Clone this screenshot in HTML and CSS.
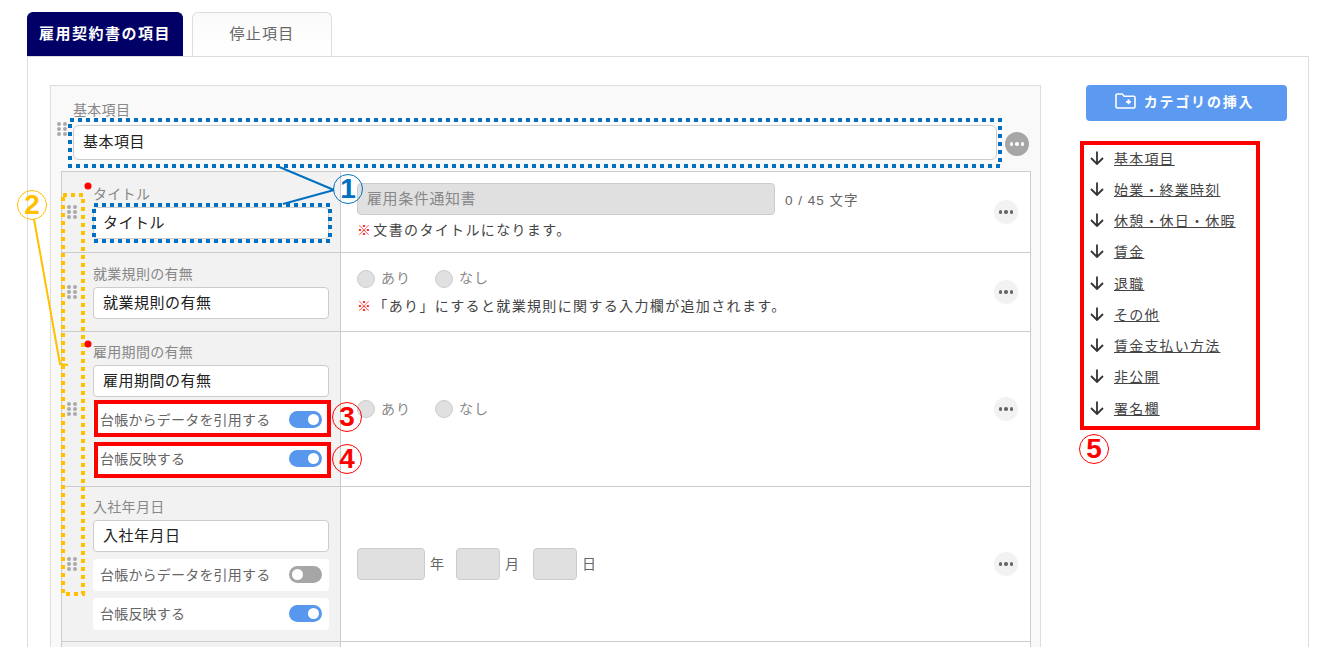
FILE: index.html
```html
<!DOCTYPE html>
<html lang="ja">
<head>
  <meta charset="UTF-8">
  <title>雇用契約書の項目</title>
  <link rel="stylesheet" href="styles.css">
</head>
<body>
  <div class="page">
    <!-- Tabs -->
    <div class="tabs">
      <div class="tab tab-active">雇用契約書の項目</div>
      <div class="tab">停止項目</div>
    </div>

    <div class="panel">
      <div class="card">
        <!-- Category -->
        <div class="category">
          <div class="grip category-grip"><i></i><i></i><i></i><i></i><i></i><i></i></div>
          <div class="category-main">
            <div class="label">基本項目</div>
            <div class="text-input category-input">基本項目</div>
          </div>
          <div class="more more-dark"><i></i><i></i><i></i></div>
        </div>

        <div class="table">
          <!-- タイトル -->
          <div class="row row-title">
            <div class="left">
              <div class="grip"><i></i><i></i><i></i><i></i><i></i><i></i></div>
              <div class="fields">
                <div class="label">タイトル</div>
                <div class="text-input">タイトル</div>
              </div>
            </div>
            <div class="right">
              <div class="content">
                <div class="title-line">
                  <div class="disabled-input">雇用条件通知書</div>
                  <span class="counter">0 / 45 文字</span>
                </div>
                <div class="note"><span class="mark">※</span>文書のタイトルになります。</div>
              </div>
              <div class="more"><i></i><i></i><i></i></div>
            </div>
          </div>

          <!-- 就業規則の有無 -->
          <div class="row row-rules">
            <div class="left">
              <div class="grip"><i></i><i></i><i></i><i></i><i></i><i></i></div>
              <div class="fields">
                <div class="label">就業規則の有無</div>
                <div class="text-input">就業規則の有無</div>
              </div>
            </div>
            <div class="right">
              <div class="content">
                <div class="radios">
                  <span class="radio"></span><span class="radio-text">あり</span>
                  <span class="radio"></span><span class="radio-text">なし</span>
                </div>
                <div class="note note-radio"><span class="mark">※</span>「あり」にすると就業規則に関する入力欄が追加されます。</div>
              </div>
              <div class="more"><i></i><i></i><i></i></div>
            </div>
          </div>

          <!-- 雇用期間の有無 -->
          <div class="row">
            <div class="left">
              <div class="grip"><i></i><i></i><i></i><i></i><i></i><i></i></div>
              <div class="fields">
                <div class="label">雇用期間の有無</div>
                <div class="text-input">雇用期間の有無</div>
                <div class="switch-row">台帳からデータを引用する<span class="toggle"></span></div>
                <div class="switch-row">台帳反映する<span class="toggle"></span></div>
              </div>
            </div>
            <div class="right">
              <div class="content">
                <div class="radios">
                  <span class="radio"></span><span class="radio-text">あり</span>
                  <span class="radio"></span><span class="radio-text">なし</span>
                </div>
              </div>
              <div class="more"><i></i><i></i><i></i></div>
            </div>
          </div>

          <!-- 入社年月日 -->
          <div class="row">
            <div class="left">
              <div class="grip"><i></i><i></i><i></i><i></i><i></i><i></i></div>
              <div class="fields">
                <div class="label">入社年月日</div>
                <div class="text-input">入社年月日</div>
                <div class="switch-row">台帳からデータを引用する<span class="toggle toggle-off"></span></div>
                <div class="switch-row">台帳反映する<span class="toggle"></span></div>
              </div>
            </div>
            <div class="right">
              <div class="content date-line">
                <span class="date-box date-year"></span><span class="date-unit">年</span>
                <span class="date-box date-month"></span><span class="date-unit">月</span>
                <span class="date-box date-month"></span><span class="date-unit">日</span>
              </div>
              <div class="more"><i></i><i></i><i></i></div>
            </div>
          </div>

          <div class="row row-next">
            <div class="left"></div>
            <div class="right"></div>
          </div>
        </div>
      </div>

      <!-- Side -->
      <div class="side">
        <div class="insert-btn">
          <svg class="folder" width="21" height="16" viewBox="0 0 21 16" fill="none" stroke="#fff" stroke-width="1.6">
            <path d="M1 2.2c0-.7.5-1.2 1.2-1.2h5l2 2.3h9.6c.7 0 1.2.5 1.2 1.2v9.3c0 .7-.5 1.2-1.2 1.2H2.2c-.7 0-1.2-.5-1.2-1.2z"/>
            <path d="M13.5 6.3v5M11 8.8h5" stroke-width="1.8"/>
          </svg>
          カテゴリの挿入
        </div>
        <ul class="jump-list">
          <li><svg class="arrow" width="14" height="14" viewBox="0 0 14 14" fill="none"><path d="M7 .5v12.5M1 7l6 6 6-6"/></svg><a>基本項目</a></li>
          <li><svg class="arrow" width="14" height="14" viewBox="0 0 14 14" fill="none"><path d="M7 .5v12.5M1 7l6 6 6-6"/></svg><a>始業・終業時刻</a></li>
          <li><svg class="arrow" width="14" height="14" viewBox="0 0 14 14" fill="none"><path d="M7 .5v12.5M1 7l6 6 6-6"/></svg><a>休憩・休日・休暇</a></li>
          <li><svg class="arrow" width="14" height="14" viewBox="0 0 14 14" fill="none"><path d="M7 .5v12.5M1 7l6 6 6-6"/></svg><a>賃金</a></li>
          <li><svg class="arrow" width="14" height="14" viewBox="0 0 14 14" fill="none"><path d="M7 .5v12.5M1 7l6 6 6-6"/></svg><a>退職</a></li>
          <li><svg class="arrow" width="14" height="14" viewBox="0 0 14 14" fill="none"><path d="M7 .5v12.5M1 7l6 6 6-6"/></svg><a>その他</a></li>
          <li><svg class="arrow" width="14" height="14" viewBox="0 0 14 14" fill="none"><path d="M7 .5v12.5M1 7l6 6 6-6"/></svg><a>賃金支払い方法</a></li>
          <li><svg class="arrow" width="14" height="14" viewBox="0 0 14 14" fill="none"><path d="M7 .5v12.5M1 7l6 6 6-6"/></svg><a>非公開</a></li>
          <li><svg class="arrow" width="14" height="14" viewBox="0 0 14 14" fill="none"><path d="M7 .5v12.5M1 7l6 6 6-6"/></svg><a>署名欄</a></li>
        </ul>
      </div>
    </div>
  </div>

  <!-- Annotations drawn over the screenshot -->
  <svg class="overlay" width="1332" height="647" viewBox="0 0 1332 647" fill="none">
    <g stroke="#0070c0" stroke-width="2">
      <path d="M277 166L334 190M283 204L334 190"/>
    </g>
    <path d="M34 219L60 364L68 365" stroke="#ffc000" stroke-width="2"/>
    <g stroke="#0070c0" stroke-width="4" stroke-dasharray="4 4">
      <rect x="70" y="120" width="930" height="46"/>
      <rect x="94" y="205" width="236" height="36"/>
    </g>
    <rect x="63" y="195" width="20" height="399" stroke="#ffc000" stroke-width="4" stroke-dasharray="4 4"/>
    <g stroke="#f00" stroke-width="4">
      <rect x="96" y="402" width="233" height="33"/>
      <rect x="96" y="444" width="233" height="32"/>
      <rect x="1082" y="143" width="176" height="285"/>
    </g>
    <circle cx="88" cy="186" r="3.5" fill="#f00"/>
    <circle cx="88" cy="344" r="3.5" fill="#f00"/>
  </svg>
  <div class="num num-1">1</div>
  <div class="num num-2">2</div>
  <div class="num num-3">3</div>
  <div class="num num-4">4</div>
  <div class="num num-5">5</div>
</body>
</html>
```

FILE: styles.css
```css
* {
  box-sizing: border-box;
}
body {
  margin: 0;
  height: 647px;
  overflow: hidden;
  position: relative;
  background: #fff;
  color: #333;
  font-family: "Noto Sans CJK JP", "Noto Sans", sans-serif;
  font-size: 14px;
}
.page {
  padding: 12px 23px 0 27px;
}

/* Tabs */
.tabs {
  display: flex;
  gap: 9px;
  height: 44px;
}
.tab {
  width: 140px;
  display: flex;
  align-items: center;
  justify-content: center;
  padding-bottom: 4px;
  background: linear-gradient(#fafafa, #fff);
  border: 1px solid #ddd;
  border-bottom: none;
  border-radius: 6px 6px 0 0;
  color: #666;
  font-size: 15px;
  letter-spacing: 1.3px;
}
.tab-active {
  width: 156px;
  background: #000066;
  border-color: #000066;
  color: #fff;
  font-weight: bold;
  letter-spacing: 1.5px;
}

/* Panel */
.panel {
  display: flex;
  gap: 45px;
  height: 700px;
  padding: 28px 21px 0 22px;
  border: 1px solid #ddd;
}
.card {
  width: 991px;
  height: 660px;
  background: #f9f9f9;
  border: 1px solid #ddd;
  padding: 16px 9px 0 0;
}
.category {
  display: flex;
  margin: 0 2px 0 6px;
}
.category-main {
  flex: 1;
  margin-left: 6px;
}
.category-grip {
  margin-top: 20px;
}
.category .more {
  margin: 30px 0 0 8px;
}
.label {
  height: 23px;
  line-height: 15px;
  color: #888;
  font-size: 14px;
  letter-spacing: .3px;
}
.text-input {
  height: 32px;
  line-height: 27px;
  padding-left: 9px;
  background: #fff;
  border: 1px solid #ccc;
  border-radius: 4px;
  color: #222;
  font-size: 15px;
  letter-spacing: .5px;
}
.category-input {
  height: 35px;
  line-height: 30px;
  border-radius: 6px;
}

/* Grip dots */
.grip {
  width: 10px;
  height: 14px;
  display: grid;
  grid-template-columns: 4px 4px;
  grid-auto-rows: 4px;
  gap: 1px 2px;
  flex-shrink: 0;
}
.grip i {
  background: #aaa;
  border-radius: 50%;
}

/* Table */
.table {
  margin: 11px 0 0 10px;
  border: 1px solid #ccc;
  border-top: none;
  background: #fff;
}
.row {
  display: grid;
  grid-template-columns: 279px 1fr;
  border-top: 1px solid #ccc;
}
.left {
  display: flex;
  align-items: center;
  gap: 16px;
  padding: 11px 11px 11px 5px;
  background: #f2f2f2;
  border-right: 1px solid #ccc;
}
.row-title .left {
  padding-top: 13px;
  padding-bottom: 13px;
}
.row-rules .left {
  padding-top: 12px;
  padding-bottom: 12px;
}
.row-next .left {
  height: 60px;
}
.fields {
  width: 236px;
}
.fields .label {
  height: 22px;
  line-height: 16px;
}
.switch-row {
  height: 32px;
  margin-top: 7px;
  padding: 0 7px 2px;
  display: flex;
  align-items: center;
  justify-content: space-between;
  background: #fff;
  border-radius: 4px;
  color: #666;
  font-size: 14px;
  letter-spacing: .2px;
}
.toggle {
  width: 33px;
  height: 17px;
  position: relative;
  background: #5897ee;
  border-radius: 9px;
}
.toggle::after {
  content: "";
  position: absolute;
  top: 3px;
  right: 3px;
  width: 11px;
  height: 11px;
  background: #fff;
  border-radius: 50%;
}
.toggle-off {
  background: #a6a6a6;
}
.toggle-off::after {
  right: auto;
  left: 3px;
}

/* Right cell */
.right {
  display: flex;
  align-items: center;
  justify-content: space-between;
  padding: 0 12px 0 16px;
}
.title-line {
  display: flex;
  align-items: center;
}
.disabled-input {
  width: 418px;
  height: 32px;
  line-height: 27px;
  padding-left: 9px;
  background: #e0e0e0;
  border: 1px solid #ccc;
  border-radius: 4px;
  color: #888;
  font-size: 15px;
  letter-spacing: .6px;
}
.counter {
  margin-left: 10px;
  color: #666;
  font-family: "Liberation Sans", "Noto Sans CJK JP", sans-serif;
  font-size: 13.5px;
  letter-spacing: 1px;
}
.note {
  height: 22px;
  line-height: 20px;
  margin-top: 4px;
  color: #444;
  font-size: 14px;
  letter-spacing: 1.35px;
  white-space: nowrap;
}
.note-radio {
  margin-top: 5px;
}
.mark {
  color: #f00;
  font-weight: bold;
  margin-right: 1px;
}
.radios {
  display: flex;
  align-items: center;
  height: 22px;
}
.radio {
  width: 18px;
  height: 18px;
  background: #e0e0e0;
  border: 1px solid #ccc;
  border-radius: 50%;
}
.radio-text {
  width: 60px;
  padding: 0 0 3px 6px;
  color: #888;
  font-size: 14px;
  letter-spacing: 1px;
}
.date-line {
  display: flex;
  align-items: center;
}
.date-box {
  height: 32px;
  background: #e0e0e0;
  border: 1px solid #ccc;
  border-radius: 4px;
}
.date-year {
  width: 68px;
}
.date-month {
  width: 44px;
}
.date-unit {
  width: 31px;
  padding: 0 0 2px 5px;
  color: #666;
  font-size: 14px;
}
.date-unit:nth-child(4) {
  width: 33px;
}

/* More button */
.more {
  width: 24px;
  height: 24px;
  display: flex;
  align-items: center;
  justify-content: center;
  gap: 2px;
  flex-shrink: 0;
  background: #f2f2f2;
  border-radius: 50%;
}
.more i {
  width: 3.5px;
  height: 3.5px;
  background: #666;
  border-radius: 50%;
}
.more-dark {
  background: #a6a6a6;
}
.more-dark i {
  background: #fff;
}

/* Side */
.side {
  width: 201px;
}
.insert-btn {
  height: 36px;
  display: flex;
  align-items: center;
  justify-content: center;
  gap: 8px;
  padding: 0 4px 5px 0;
  background: #5b9af0;
  border-radius: 4px;
  color: #fff;
  font-size: 14px;
  font-weight: bold;
  letter-spacing: 1.8px;
}
.jump-list {
  list-style: none;
  margin: 21px 0 0;
  padding: 0 0 0 4px;
}
.jump-list li {
  height: 31.25px;
  display: flex;
  align-items: center;
  gap: 10px;
}
.jump-list a {
  color: #444;
  font-size: 14px;
  letter-spacing: 1.2px;
  text-decoration: underline;
}
.arrow {
  stroke: #333;
  stroke-width: 1.8;
}

/* Annotations */
.overlay {
  position: absolute;
  top: 0;
  left: 0;
}
.num {
  position: absolute;
  width: 30px;
  height: 30px;
  display: flex;
  align-items: center;
  justify-content: center;
  border: 1.5px solid #f00;
  border-radius: 50%;
  color: #f00;
  font-family: "Liberation Sans", sans-serif;
  font-size: 28px;
  font-weight: bold;
}
.num-1 {
  left: 333px;
  top: 174px;
  border-color: #0070c0;
  color: #0070c0;
}
.num-2 {
  left: 17px;
  top: 190px;
  border-color: #ffc000;
  color: #ffc000;
}
.num-3 {
  left: 332px;
  top: 402px;
}
.num-4 {
  left: 332px;
  top: 444px;
}
.num-5 {
  left: 1079px;
  top: 434px;
}
```
